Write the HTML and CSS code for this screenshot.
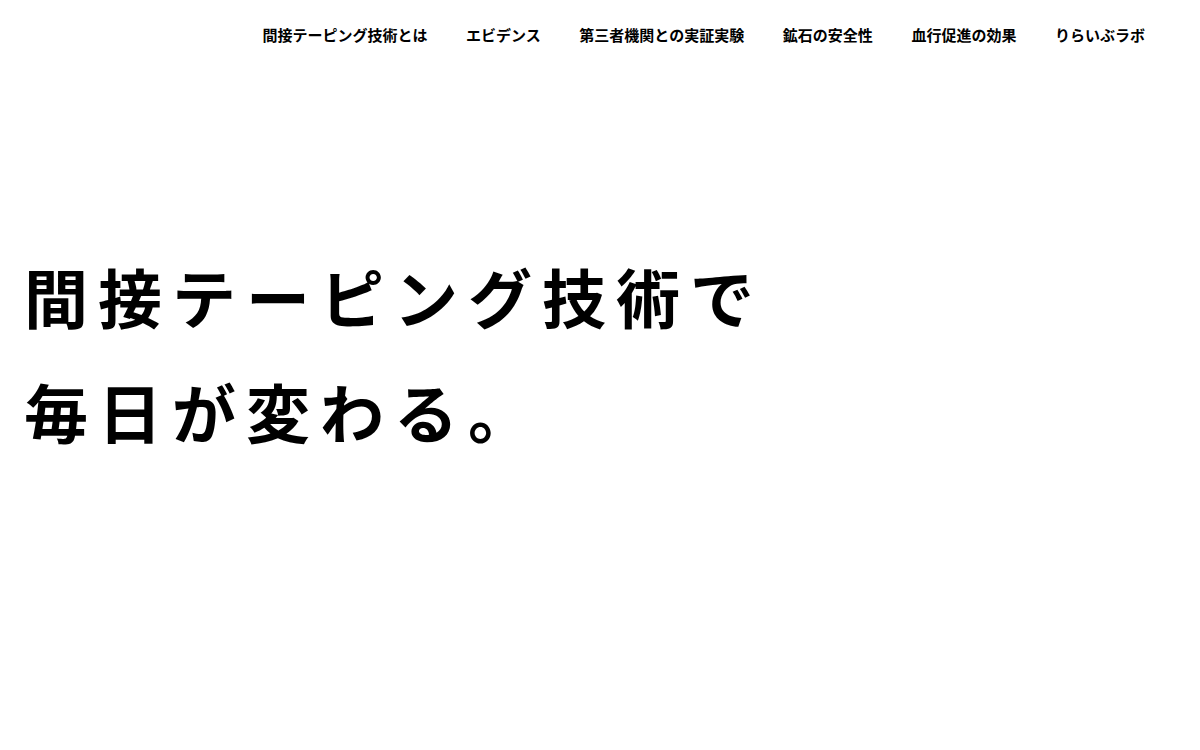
FILE: index.html
```html
<!DOCTYPE html>
<html lang="ja">
<head>
<meta charset="utf-8">
<title>間接テーピング技術</title>
<link rel="stylesheet" href="styles.css">
</head>
<body>
<header class="site-header">
  <nav class="global-nav">
    <a class="nav-link" href="#">間接テーピング技術とは</a>
    <a class="nav-link" href="#">エビデンス</a>
    <a class="nav-link" href="#">第三者機関との実証実験</a>
    <a class="nav-link" href="#">鉱石の安全性</a>
    <a class="nav-link" href="#">血行促進の効果</a>
    <a class="nav-link" href="#">りらいぶラボ</a>
  </nav>
</header>
<main class="hero">
  <h1 class="hero-title">間接テーピング技術で<br>毎日が変わる。</h1>
</main>
</body>
</html>
```

FILE: styles.css
```css
html, body {
  margin: 0;
  padding: 0;
  background: #fff;
}
body {
  font-family: "Noto Sans CJK JP", "Noto Sans", sans-serif;
  color: #000;
  width: 1200px;
  height: 750px;
  overflow: hidden;
}
.site-header {
  display: flex;
  justify-content: flex-end;
  padding: 25px 55px 0 0;
}
.global-nav {
  display: flex;
  gap: 38.6px;
}
.nav-link {
  font-size: 15px;
  line-height: 20px;
  font-weight: 700;
  color: #000;
  text-decoration: none;
  white-space: nowrap;
}
.hero {
  padding: 193px 0 0 24px;
}
.hero-title {
  margin: 0;
  font-size: 64px;
  line-height: 115px;
  font-weight: 700;
  letter-spacing: 10px;
}
```
